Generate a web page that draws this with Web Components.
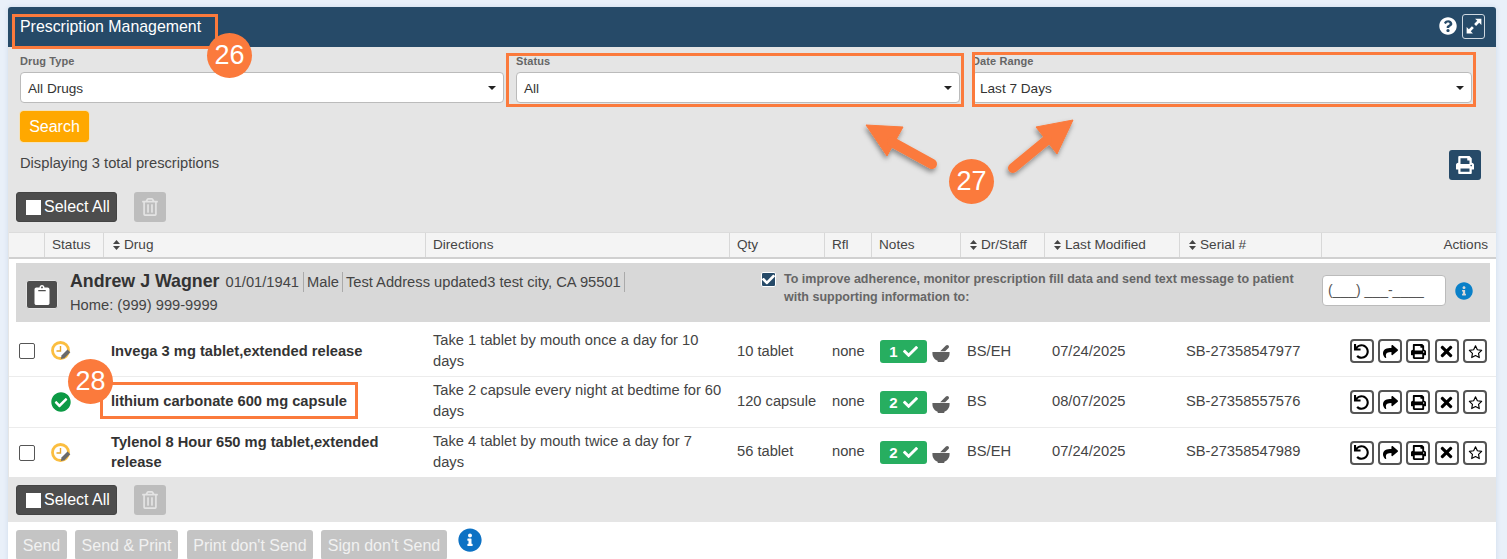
<!DOCTYPE html>
<html lang="en">
<head>
<meta charset="utf-8">
<title>Prescription Management</title>
<style>
html,body{margin:0;height:559px;overflow:hidden;background:#e9f0f9;font:14.7px/1.4 "Liberation Sans",Arial,sans-serif;color:#333}
</style>
</head>
<body>
<rx-app>
  <rx-header slot="header">Prescription Management</rx-header>
  <rx-filters slot="filters">
    <rx-filter label="Drug Type">All Drugs</rx-filter>
    <rx-filter label="Status">All</rx-filter>
    <rx-filter label="Date Range">Last 7 Days</rx-filter>
  </rx-filters>
  <rx-summary slot="summary">Displaying 3 total prescriptions</rx-summary>
  <rx-toolbar slot="top" class="top"></rx-toolbar>
  <rx-columns slot="columns"></rx-columns>
  <rx-patient slot="patient"></rx-patient>
  <rx-row slot="rows" check state="pending" count="1" qty="10 tablet" staff="BS/EH" date="07/24/2025" serial="SB-27358547977">
    <span slot="drug">Invega 3 mg tablet,extended release</span>
    <span slot="dir">Take 1 tablet by mouth once a day for 10 days</span>
  </rx-row>
  <rx-row slot="rows" up state="done" count="2" qty="120 capsule" staff="BS" date="08/07/2025" serial="SB-27358557576">
    <span slot="drug">lithium carbonate 600 mg capsule</span>
    <span slot="dir">Take 2 capsule every night at bedtime for 60 days</span>
  </rx-row>
  <rx-row slot="rows" up check last state="pending" count="2" qty="56 tablet" staff="BS/EH" date="07/24/2025" serial="SB-27358547989">
    <span slot="drug">Tylenol 8 Hour 650 mg tablet,extended release</span>
    <span slot="dir">Take 4 tablet by mouth twice a day for 7 days</span>
  </rx-row>
  <rx-toolbar slot="bottom"></rx-toolbar>
  <rx-sendbar slot="send"></rx-sendbar>
</rx-app>
<rx-marks></rx-marks>

<script>
const P={
print:[512,"M448 192V77.25c0-8.49-3.37-16.62-9.37-22.63L393.37 9.37c-6-6-14.14-9.37-22.63-9.37H96C78.33 0 64 14.33 64 32v160c-35.35 0-64 28.65-64 64v112c0 8.84 7.16 16 16 16h48v96c0 17.67 14.33 32 32 32h320c17.67 0 32-14.33 32-32v-96h48c8.84 0 16-7.16 16-16V256c0-35.35-28.65-64-64-64zm-64 256H128v-96h256v96zm0-224H128V64h192v48c0 8.84 7.16 16 16 16h48v96zm48 72c-13.25 0-24-10.75-24-24 0-13.26 10.75-24 24-24s24 10.74 24 24c0 13.25-10.75 24-24 24z"],
undo:[512,"M212.333 224.333H12c-6.627 0-12-5.373-12-12V12C0 5.373 5.373 0 12 0h48c6.627 0 12 5.373 12 12v78.112C117.773 39.279 184.26 7.47 258.175 8.007c136.906.994 246.448 111.623 246.157 248.532C504.041 393.258 393.12 504 256.333 504c-64.089 0-122.496-24.313-166.51-64.215-5.099-4.622-5.334-12.554-.467-17.42l33.967-33.967c4.474-4.474 11.662-4.717 16.401-.525C170.76 415.336 211.58 432 256.333 432c97.268 0 176-78.716 176-176 0-97.267-78.716-176-176-176-58.496 0-110.28 28.476-142.274 72.333h98.274c6.627 0 12 5.373 12 12v48c0 6.627-5.373 12-12 12z"],
share:[512,"M503.691 189.836L327.687 37.851C312.281 24.546 288 35.347 288 56.015v80.053C127.371 137.907 0 170.1 0 322.326c0 61.441 39.581 122.309 83.333 154.132 13.653 9.931 33.111-2.533 28.077-18.631C66.066 312.814 132.917 274.316 288 272.085V360c0 20.7 24.3 31.453 39.687 18.164l176.004-152c11.071-9.562 11.086-26.753 0-36.328z"],
times:[352,"M242.72 256l100.07-100.07c12.28-12.28 12.28-32.19 0-44.48l-22.24-22.24c-12.28-12.28-32.19-12.28-44.48 0L176 189.28 75.93 89.21c-12.28-12.28-32.19-12.28-44.48 0L9.21 111.45c-12.28 12.28-12.28 32.19 0 44.48L109.28 256 9.21 356.07c-12.28 12.28-12.28 32.19 0 44.48l22.24 22.24c12.28 12.28 32.2 12.28 44.48 0L176 322.72l100.07 100.07c12.28 12.28 32.2 12.28 44.48 0l22.24-22.24c12.28-12.28 12.28-32.19 0-44.48L242.72 256z"],
star:[576,"M288 40l72 148 164 23-119 115 28 163-145-77-145 77 28-163L52 211l164-23z","none"],
check:[512,"M173.898 439.404l-166.4-166.4c-9.997-9.997-9.997-26.206 0-36.204l36.203-36.204c9.997-10.001 26.207-10.001 36.204 0L192 312.69 432.095 72.596c9.997-9.997 26.207-9.997 36.204 0l36.203 36.204c9.997 9.997 9.997 26.206 0 36.204l-294.4 294.401c-9.998 9.997-26.207 9.997-36.204-.001z"],
checkc:[512,"M504 256c0 136.967-111.033 248-248 248S8 392.967 8 256 119.033 8 256 8s248 111.033 248 248zM227.314 387.314l184-184c6.248-6.248 6.248-16.379 0-22.627l-22.627-22.627c-6.248-6.249-16.379-6.249-22.628 0L216 308.118l-70.059-70.059c-6.248-6.248-16.379-6.248-22.628 0l-22.627 22.627c-6.248 6.248-6.248 16.379 0 22.627l104 104c6.249 6.249 16.379 6.249 22.628.001z"],
question:[512,"M504 256c0 136.997-111.043 248-248 248S8 392.997 8 256C8 119.083 119.043 8 256 8s248 111.083 248 248zM262.655 90c-54.497 0-89.255 22.957-116.549 63.758-3.536 5.286-2.353 12.415 2.715 16.258l34.699 26.31c5.205 3.947 12.621 3.008 16.665-2.122 17.864-22.658 30.113-35.797 57.303-35.797 20.429 0 45.698 13.148 45.698 32.958 0 14.976-12.363 22.667-32.534 33.976C247.128 238.528 216 254.941 216 296v4c0 6.627 5.373 12 12 12h56c6.627 0 12-5.373 12-12v-1.333c0-28.462 83.186-29.647 83.186-106.667 0-58.002-60.165-102-116.531-102zM256 338c-25.365 0-46 20.635-46 46 0 25.364 20.635 46 46 46s46-20.636 46-46c0-25.365-20.635-46-46-46z"],
info:[512,"M256 8C119.043 8 8 119.083 8 256c0 136.997 111.043 248 248 248s248-111.003 248-248C504 119.083 392.957 8 256 8zm0 110c23.196 0 42 18.804 42 42s-18.804 42-42 42-42-18.804-42-42 18.804-42 42-42zm56 254c0 6.627-5.373 12-12 12h-88c-6.627 0-12-5.373-12-12v-24c0-6.627 5.373-12 12-12h12v-64h-12c-6.627 0-12-5.373-12-12v-24c0-6.627 5.373-12 12-12h64c6.627 0 12 5.373 12 12v100h12c6.627 0 12 5.373 12 12v24z"],
trash:[448,"M268 416h24a12 12 0 0 0 12-12V188a12 12 0 0 0-12-12h-24a12 12 0 0 0-12 12v216a12 12 0 0 0 12 12zM432 80h-82.41l-34-56.7A48 48 0 0 0 274.41 0H173.59a48 48 0 0 0-41.16 23.3L98.41 80H16A16 16 0 0 0 0 96v16a16 16 0 0 0 16 16h16v336a48 48 0 0 0 48 48h288a48 48 0 0 0 48-48V128h16a16 16 0 0 0 16-16V96a16 16 0 0 0-16-16zM171.84 50.91A6 6 0 0 1 177 48h94a6 6 0 0 1 5.15 2.91L293.61 80H154.39zM368 464H80V128h288zm-212-48h24a12 12 0 0 0 12-12V188a12 12 0 0 0-12-12h-24a12 12 0 0 0-12 12v216a12 12 0 0 0 12 12z"],
clipboard:[384,"M384 112v352c0 26.51-21.49 48-48 48H48c-26.51 0-48-21.49-48-48V112c0-26.51 21.49-48 48-48h80c0-35.29 28.71-64 64-64s64 28.71 64 64h80c26.51 0 48 21.49 48 48zM192 40c-13.255 0-24 10.745-24 24s10.745 24 24 24 24-10.745 24-24-10.745-24-24-24m96 114v-20a6 6 0 0 0-6-6H102a6 6 0 0 0-6 6v20a6 6 0 0 0 6 6h180a6 6 0 0 0 6-6z"],
expand:[512,"M290 20h202v202l-70-70-100 100-62-62 100-100zM222 492H20V290l70 70 100-100 62 62-100 100z"],
mortar:[512,"M12 226H500V262C500 370 430 450 352 474V496C352 504 346 510 338 510H174C166 510 160 504 160 496V474C82 450 12 370 12 262ZM232 206L396 42C416 22 448 22 468 42 488 62 488 92 468 112L374 206Z"]
};
const def=(n,html)=>{customElements.define(n,class extends HTMLElement{
  constructor(){super();this.attachShadow({mode:'open'})}
  connectedCallback(){this.shadowRoot.innerHTML=typeof html==='function'?html(this):html}
})};
const A=(e,n,d='')=>e.getAttribute(n)??d;

def('rx-icon',e=>{const p=P[A(e,'name')];const s=A(e,'size','14');
  return `<style>:host{display:inline-flex;align-items:center;justify-content:center;line-height:0}</style>
  <svg width="${s}" height="${s}" viewBox="0 0 ${p[0]} 512"><path d="${p[1]}" ${p[2]==='none'?'fill="none" stroke="currentColor" stroke-width="44" stroke-linejoin="round"':'fill="currentColor"'}/></svg>`});

def('rx-app',`<style>
:host{display:block;padding:7px 11px 0 8px}
.panel{background:#e5e5e5;border-radius:3px 3px 0 0;box-shadow:0 0 5px rgba(90,120,170,.18);height:560px;display:flex;flex-direction:column}
.grid{margin-left:1px;background:#fff}
.body{background:#fff;padding:4px 6px 4px 7px}
</style>
<div class="panel">
<slot name="header"></slot><slot name="filters"></slot><slot name="summary"></slot><slot name="top"></slot>
<div class="grid"><slot name="columns"></slot><div class="body"><slot name="patient"></slot></div><slot name="rows"></slot></div>
<slot name="bottom"></slot><slot name="send"></slot>
</div>`);

def('rx-header',`<style>
:host{display:flex;align-items:center;justify-content:space-between;height:40px;background:#264a68;color:#fff;border-radius:3px 3px 0 0;padding:0 11px 0 12px;box-sizing:border-box;font-size:15.9px}
.r{display:flex;align-items:center;gap:5px;position:relative;top:-1px}
.x{width:21px;height:23px;border:1px solid #cfd8e0;border-radius:3px;display:flex;align-items:center;justify-content:center}
</style><span><slot></slot></span><span class="r"><rx-icon name="question" size="18"></rx-icon><span class="x"><rx-icon name="expand" size="16"></rx-icon></span></span>`);

def('rx-filters',`<style>:host{display:grid;grid-template-columns:484px 444px 500px;column-gap:12px;padding:8px 0 0 12px}</style><slot></slot>`);

def('rx-filter',e=>`<style>
:host{display:block}
label{display:block;font-size:11px;font-weight:700;color:#666;line-height:13px;height:17px;letter-spacing:.1px}
.s{height:31px;box-sizing:border-box;background:#fff;border:1px solid #bbb;border-radius:4px;display:flex;align-items:center;justify-content:space-between;padding:2px 7px 0 7px;font-size:13.6px;color:#333}
.c{width:0;height:0;border:4px solid transparent;border-top:4px solid #222;border-bottom:0;margin-top:-2px}
</style><label>${A(e,'label')}</label><div class="s"><span><slot></slot></span><i class="c"></i></div>`);

def('rx-summary',`<style>
:host{display:block;padding:8px 15px 0 12px}
.b{background:#ffa800;color:#fff;outline:1px solid #f3e2bd;border-radius:3px;height:31px;width:69px;box-sizing:border-box;display:flex;align-items:center;justify-content:center;padding-top:1px;font-size:16px}
.d{color:#444;height:19px;line-height:19px;margin-top:4px}
.p{width:32px;height:30px;background:#264a68;border-radius:3px;color:#fff;display:flex;align-items:center;justify-content:center}
.o{display:flex;justify-content:space-between;align-items:flex-start;padding-top:8px}
</style>
<div class="b">Search</div>
<div class="o"><span class="d"><slot></slot></span><span class="p"><rx-icon name="print" size="18"></rx-icon></span></div>`);

def('rx-toolbar',e=>`<style>
:host{display:flex;align-items:center;gap:17px;padding:${e.classList.contains('top')?'12px 0 10px 8px':'8px 0 7px 8px'}}
.s{width:101px;height:30px;box-sizing:border-box;background:#4d4d4d;border:1px solid #444;border-radius:3px;color:#fff;display:flex;align-items:center;padding-left:9px;gap:3px;font-size:16px}
.s i{width:15px;height:15px;background:#fff;display:block}
.t{width:32px;height:30px;background:#bdbdbd;border-radius:3px;color:#e4e4e4;display:flex;align-items:center;justify-content:center}
</style><span class="s"><i></i>Select All</span><span class="t"><rx-icon name="trash" size="18"></rx-icon></span>`);

const COLS='36px 59px 322px 304px 95px 47px 89px 84px 135px 142px 174px';
def('rx-columns',()=>{
 const S='<svg width="7" height="10" viewBox="0 0 7 10"><path d="M3.5 0L7 4H0zM3.5 10L0 6h7z" fill="#444"/></svg>';
 const c=[['',0],['Status',0],['Drug',1],['Directions',0],['Qty',0],['Rfl',0],['Notes',0],['Dr/Staff',1],['Last Modified',1],['Serial #',1],['Actions',0]];
 return `<style>
 :host{display:grid;grid-template-columns:${COLS};height:27px;box-sizing:border-box;background:#f4f4f4;border-top:1px solid #dcdcdc;border-bottom:2px solid #d0d0d0;font-size:13.6px;color:#444}
 div{display:flex;align-items:center;gap:4px;padding-left:7px;border-right:1px solid #d8d8d8;box-sizing:border-box}
 div.s{padding-left:9px}
 div:last-child{justify-content:flex-end;border-right:0;padding-right:8px}
 </style>`+c.map(([t,s])=>`<div class="${s?'s':''}">${s?S:''}<span>${t}</span></div>`).join('')});

def('rx-patient',`<style>
:host{display:flex;height:59px;background:#d8d8d8;box-sizing:border-box;color:#444}
.c{flex:0 0 32px;height:29px;margin:17px 12px 0 10px;background:#4d4d4d;border:1px solid #e4e4e4;box-sizing:border-box;border-radius:3px;color:#fff;display:flex;align-items:center;justify-content:center}
.m{flex:0 0 691px;padding-top:6px}
.l{display:flex;align-items:center;height:25px;font-size:14.7px;white-space:nowrap}
b{font-size:17.8px;color:#333;margin-right:5px}
.l span{padding:0 3px 0 1px;border-right:1px solid #aaa;line-height:20px;margin-right:2px}
.l span:first-of-type{padding-right:4px}
.h{line-height:20px;margin-top:1px}
.k{flex:0 0 15px;height:15px;margin:9px 8px 0 0;background:#264a68;border:1px solid #fff;box-sizing:border-box;border-radius:2px;color:#fff;display:flex;align-items:center;justify-content:center}
.t{flex:0 0 530px;font-size:12.5px;font-weight:700;line-height:18px;color:#666;padding-top:7px;margin-right:8px}
.p{flex:0 0 124px;height:31px;margin-top:12px;background:#fff;border:1px solid #bbb;box-sizing:border-box;border-radius:4px;display:flex;align-items:center;padding-left:5px;font-size:14px;color:#555}
.i{margin:19px 0 0 9px;color:#0a80c8;height:18px}
</style>
<div class="c"><rx-icon name="clipboard" size="20"></rx-icon></div>
<div class="m"><div class="l"><b>Andrew J Wagner</b><span>01/01/1941</span><span>Male</span><span>Test Address updated3 test city, CA 95501</span></div><div class="h">Home: (999) 999-9999</div></div>
<div class="k"><rx-icon name="check" size="13"></rx-icon></div>
<div class="t">To improve adherence, monitor prescription fill data and send text message to patient with supporting information to:</div>
<div class="p">(___) ___-____</div>
<div class="i"><rx-icon name="info" size="18"></rx-icon></div>`);

const clock=`<svg width="20" height="20" viewBox="0 0 20 20"><circle cx="9.5" cy="9.5" r="8" fill="#fff" stroke="#fbbe40" stroke-width="2.8"/><path d="M9.5 5v5H5.5" fill="none" stroke="#e8a62a" stroke-width="1.4"/><path d="M10.5 14.5l6-6 2.8 2.8-6 6-3.4.6z" fill="#6a6a6a"/></svg>`;
def('rx-row',e=>{
 const acts=['undo','share','print','times','star'].map(n=>`<span class="a"><rx-icon name="${n}" size="${n==='times'?17:15}"></rx-icon></span>`).join('');
 const up=e.hasAttribute('up')?'padding-bottom:2px;':'';
 return `<style>
 :host{display:grid;grid-template-columns:${COLS};height:${e.hasAttribute('last')?'49px':'50px'};align-items:center;background:#fff;color:#444;${e.hasAttribute('last')?'':'border-bottom:1px solid #ececec'}}
 .box{width:16px;height:16px;border:1px solid #555;border-radius:2px;box-sizing:border-box;background:#fff;margin-left:10px}
 .st{padding-left:6px;line-height:0}.d{padding-left:7px;padding-right:30px;font-weight:700;color:#333;line-height:20px;${up}}
 .dir{padding:0 7px;line-height:21px;${up}}
 .p{padding-left:7px;white-space:nowrap;${up}}.p.m{padding-left:6px}
 .n{display:flex;align-items:center;gap:5px;padding-left:8px}
 .g{width:47px;height:23px;background:#27ae60;border-radius:3px;color:#fff;font-weight:700;font-size:15px;display:flex;align-items:center;justify-content:center;gap:5px}
 .mo{color:#5f5f5f;line-height:0;margin-top:3px}
 .as{display:flex;gap:4.3px;justify-content:flex-end;padding-right:9px}
 .a{width:24px;height:24px;border:2px solid #555;border-radius:4px;box-sizing:border-box;color:#000;display:flex;align-items:center;justify-content:center;background:#fff}
 </style>
 <div>${e.hasAttribute('check')?'<div class="box"></div>':''}</div>
 <div class="st">${A(e,'state')==='done'?'<rx-icon name="checkc" size="20" style="color:#0c9a45"></rx-icon>':clock}</div>
 <div class="d"><slot name="drug"></slot></div>
 <div class="dir"><slot name="dir"></slot></div>
 <div class="p">${A(e,'qty')}</div><div class="p">none</div>
 <div class="n"><span class="g">${A(e,'count')}<rx-icon name="check" size="15"></rx-icon></span><span class="mo"><rx-icon name="mortar" size="18"></rx-icon></span></div>
 <div class="p m">${A(e,'staff')}</div><div class="p">${A(e,'date')}</div><div class="p m">${A(e,'serial')}</div>
 <div class="as">${acts}</div>`});

def('rx-sendbar',`<style>
:host{display:flex;align-items:flex-start;gap:8px;background:#fff;padding:8px 0 0 8px;flex:1}
span{height:30px;background:#c4c4c4;color:#f1f1f1;border-radius:3px;font-size:16px;display:flex;align-items:center;justify-content:center;box-sizing:border-box;white-space:nowrap;padding-top:2px}
.i{color:#0d72c4;margin:-2px 0 0 3px}
</style>
<span style="width:51px">Send</span><span style="width:103px">Send &amp; Print</span><span style="width:126px;margin-left:1px">Print don't Send</span><span style="width:126px">Sign don't Send</span>
<rx-icon class="i" name="info" size="24"></rx-icon>`);

const box=(x,y,w,h)=>`<div class="box" style="left:${x}px;top:${y}px;width:${w}px;height:${h}px"></div>`;
const num=(x,y,t)=>`<div class="num" style="left:${x}px;top:${y}px">${t}</div>`;
def('rx-marks',`<style>
:host{position:absolute;left:0;top:0;width:1507px;height:559px;pointer-events:none;overflow:hidden}
.box{position:absolute;border:3px solid #fb7a3c;box-sizing:border-box}
.num{position:absolute;width:45px;height:45px;border-radius:50%;background:#fb7a3c;color:#fff;font:27px/45px "Liberation Sans",Arial,sans-serif;text-align:center}
svg{position:absolute;left:0;top:0}
</style>
<svg width="1507" height="559"><defs><filter id="s" x="-30%" y="-30%" width="160%" height="160%"><feDropShadow dx="-1" dy="3" stdDeviation="2.5" flood-color="#000" flood-opacity=".4"/></filter></defs>
<g filter="url(#s)" fill="#fb7a3c" stroke="#fb7a3c">
<path d="M866 125L903 127 887 156z"/><path d="M892 142L932 164" stroke-width="10" stroke-linecap="round" fill="none"/>
<path d="M1073 120L1036 127 1057 154z"/><path d="M1047 140L1013 168" stroke-width="10" stroke-linecap="round" fill="none"/>
</g></svg>`
+box(12,14,206,35)+box(506,53,458,54)+box(972,52,504,55)+box(100,382,258,37)
+num(207,33,'26')+num(949,159,'27')+num(68,359,'28'));
</script>
</body>
</html>
